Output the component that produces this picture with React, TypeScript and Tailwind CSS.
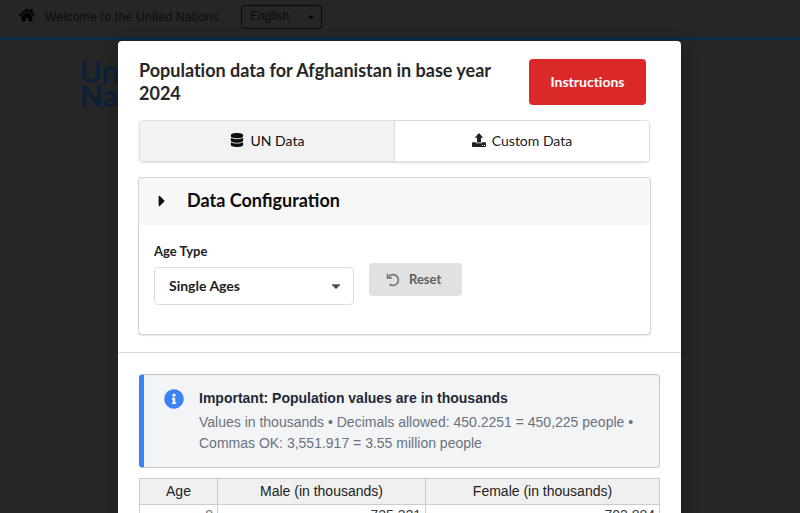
import React from "react";
import { FaHome, FaDatabase, FaCaretDown, FaCaretRight, FaInfoCircle } from "react-icons/fa";

const LATO = "font-['Lato',sans-serif]";
const ARIAL = "font-['Liberation_Sans',Arial,sans-serif]";

function UploadIcon() {
  return (
    <svg viewBox="0 0 14 14" className="h-[14px] w-[14px] shrink-0" fill="currentColor" aria-hidden="true">
      <path d="M7 0 11.3 4.7H9V9.4H5V4.7H2.7Z" />
      <path fillRule="evenodd" d="M.7 9.2H4.2V10.3h5.6v-1.1h3.5c.4 0 .7.3.7.7v3.4c0 .4-.3.7-.7.7H.7c-.4 0-.7-.3-.7-.7V9.9c0-.4.3-.7.7-.7ZM10.2 11.9v1h1v-1Zm1.9 0v1h1v-1Z" />
    </svg>
  );
}

function UndoIcon() {
  return (
    <svg viewBox="0 0 14 14" className="h-[14px] w-[14px] shrink-0" aria-hidden="true">
      <path d="M2.6 3.9A5.4 5.4 0 1 1 3.4 11.1" fill="none" stroke="currentColor" strokeWidth="1.7" />
      <path d="M.7.5H2.2V3.9L5.9 4.1V5.7H.7Z" fill="currentColor" />
    </svg>
  );
}

function Backdrop() {
  return (
    <div className="absolute inset-0 bg-[#262626]">
      <header className={`flex h-[40px] items-start border-b-3 border-[#0b2d47] bg-[#262626] pl-[19px] ${ARIAL}`}>
        <a href="#home" aria-label="Home" className="mt-[7px] text-black">
          <FaHome size={16} />
        </a>
        <span className="ml-[10px] mt-[8px] text-[12px] leading-[18px] tracking-wide text-[#0c0c0c]">
          Welcome to the United Nations
        </span>
        <div className="relative ml-[22px] mt-[5px] flex">
          <select
            aria-label="Language"
            defaultValue="English"
            className="h-[24px] w-[81px] appearance-none rounded-[3px] border border-[#0a0a0a] bg-transparent pb-[2px] pl-[8px] text-[12px] text-[#0c0c0c]"
          >
            <option>English</option>
          </select>
          <FaCaretDown size={10} className="pointer-events-none absolute right-[6px] top-[7px] text-[#0a0a0a]" />
        </div>
      </header>
      <div className="pl-[80px] pt-[19px] text-[30px] font-bold leading-[24px] text-[#0b213b]">
        United
        <br />
        Nations
      </div>
    </div>
  );
}

function SourceTabs() {
  return (
    <div className="mr-[10px] mt-[15px] flex h-[42px] overflow-hidden rounded-[4px] border border-[#dededf] text-[14px] shadow-[0_1px_2px_0_rgba(34,36,38,0.15)]">
      <button className="flex flex-1 items-center justify-center gap-[7px] border-r border-[#dededf] bg-[#f2f2f2] pb-[2px] text-[#0d0d0d]">
        <FaDatabase size={14} />
        UN Data
      </button>
      <button className="flex flex-1 items-center justify-center gap-[6px] bg-white pb-[2px] text-[#212121]">
        <UploadIcon />
        Custom Data
      </button>
    </div>
  );
}

function Configuration() {
  return (
    <section className="mr-[10px] mt-[16px] h-[156px] overflow-hidden rounded-[3px] shadow-[0_0_0_1px_#d4d4d5,0_1px_2px_0_#b4b4b5]">
      <h3 className="flex h-[47px] items-center bg-[#f7f7f7] pb-[2px] pl-[14px] text-[18px] font-bold text-[#0d0d0d]">
        <span className="w-[34px]">
          <FaCaretRight size={18} />
        </span>
        Data Configuration
      </h3>
      <div className="flex items-start gap-[15px] px-[15px] pt-[17px]">
        <div className="flex flex-col">
          <label htmlFor="age-type" className="mb-[7px] text-[13px] font-bold leading-[18px] text-[#212121]">
            Age Type
          </label>
          <div className="relative">
            <select
              id="age-type"
              className="h-[38px] w-[200px] appearance-none rounded-[4px] border border-[#dededf] bg-white pb-[2px] pl-[14px] text-[14px] font-bold text-[#212121]"
            >
              <option>Single Ages</option>
            </select>
            <FaCaretDown size={14} className="pointer-events-none absolute right-[11px] top-[12px] text-[#4d4d4d]" />
          </div>
        </div>
        <button className="mt-[21px] flex h-[33px] w-[93px] items-center gap-[9px] rounded-[4px] bg-[#e0e1e2] pl-[17px] text-[13px] font-bold text-[#5f6061]">
          <span className="text-[#767778]">
            <UndoIcon />
          </span>
          Reset
        </button>
      </div>
    </section>
  );
}

function Notice() {
  return (
    <div className={`flex gap-[15px] rounded-[4px] border border-l-5 border-[#c4c5c7] border-l-[#3b82f6] bg-[#f3f4f6] pb-[13px] pl-[20px] pr-[20px] pt-[12px] ${ARIAL}`}>
      <FaInfoCircle size={20} className="mt-[2px] shrink-0 text-[#3b82f6]" />
      <div>
        <p className="mb-[3px] text-[14px] font-bold leading-[22px] text-[#1f2937]">
          Important: Population values are in thousands
        </p>
        <p className="text-[14px] leading-[21px] text-[#6b7280]">
          Values in thousands • Decimals allowed: 450.2251 = 450,225 people • Commas OK: 3,551.917 = 3.55 million people
        </p>
      </div>
    </div>
  );
}

function PopulationTable() {
  return (
    <table className={`mt-[10px] w-full table-fixed border-collapse text-[14px] leading-[21px] ${ARIAL}`}>
      <colgroup>
        <col className="w-[15%]" />
        <col className="w-[40%]" />
        <col className="w-[45%]" />
      </colgroup>
      <thead>
        <tr className="h-[26px] bg-[#f0f0f0] text-[#222222]">
          {["Age", "Male (in thousands)", "Female (in thousands)"].map((h) => (
            <th key={h} className="border border-[#cccccc] p-0 font-normal">{h}</th>
          ))}
        </tr>
      </thead>
      <tbody>
        <tr className="text-right leading-[20px]">
          <td className="border border-[#cccccc] px-[4px] py-0 text-[#777777]">0</td>
          <td className="border border-[#cccccc] px-[4px] py-0 text-[#373737]">725.321</td>
          <td className="border border-[#cccccc] px-[4px] py-0 text-[#373737]">702.884</td>
        </tr>
      </tbody>
    </table>
  );
}

export default function App() {
  return (
    <div className={`relative h-screen overflow-hidden ${LATO}`}>
      <Backdrop />
      <main className="relative ml-[118px] mr-[119px] mt-[41px] min-h-screen rounded-[4px] bg-white shadow-[1px_3px_15px_2px_rgba(0,0,0,0.2)]">
        <div className="border-b border-[#dededf] px-[21px] pb-[18px] pt-[18px]">
          <div className="mr-[14px] flex items-start justify-between gap-[20px]">
            <h2 className="text-[18px] font-bold leading-[23px] text-[#272727] [font-variant-ligatures:none]">
              Population data for Afghanistan in base year 2024
            </h2>
            <button className="h-[46px] w-[117px] shrink-0 rounded-[4px] bg-[#db2828] pb-[2px] text-[14px] font-bold text-white [font-variant-ligatures:none]">
              Instructions
            </button>
          </div>
          <SourceTabs />
          <Configuration />
        </div>
        <div className="px-[21px] pt-[21px]">
          <Notice />
          <PopulationTable />
        </div>
      </main>
    </div>
  );
}
